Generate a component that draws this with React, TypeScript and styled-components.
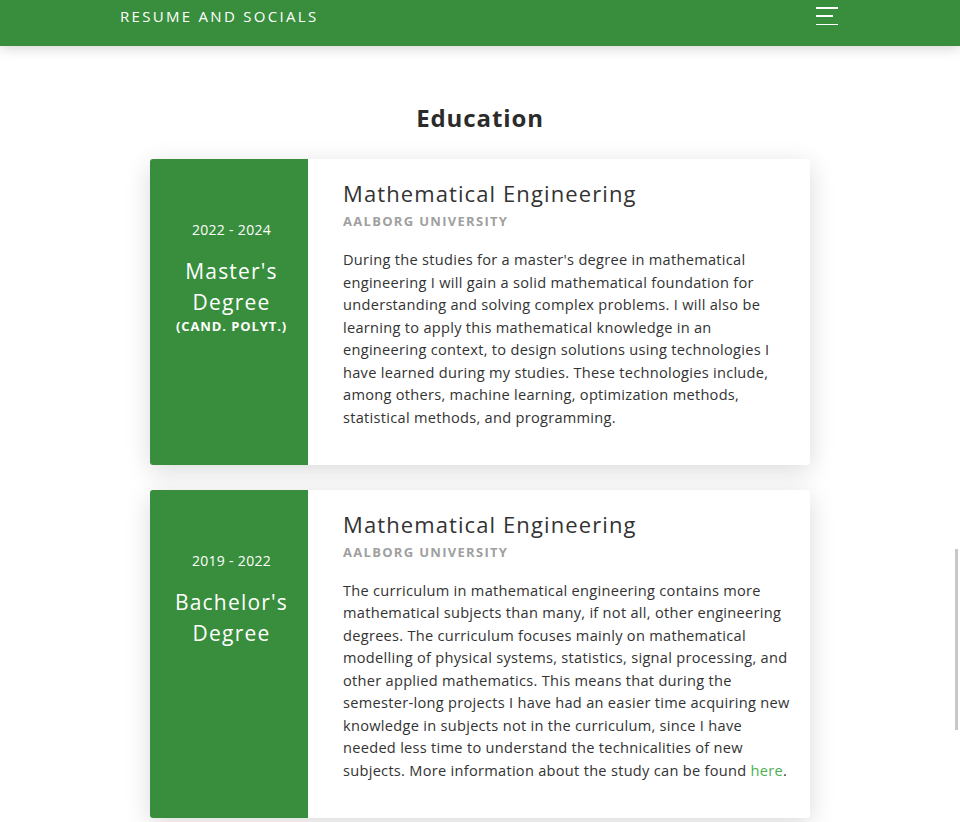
import React from "react";
import styled, { createGlobalStyle } from "styled-components";

const GlobalStyle = createGlobalStyle`
  html, body {
    margin: 0;
    padding: 0;
    background: #ffffff;
    font-family: "Open Sans", "Liberation Sans", sans-serif;
    color: #333333;
  }
  * { box-sizing: border-box; }
`;

const GREEN = "#388e3c";

const Header = styled.header`
  height: 46px;
  background: ${GREEN};
  box-shadow: 0 2px 12px rgba(0, 0, 0, 0.18);
  position: relative;
  z-index: 2;
`;

const HeaderInner = styled.div`
  width: 720px;
  height: 32px;
  margin: 0 auto;
  display: flex;
  align-items: center;
  justify-content: space-between;
`;

const Brand = styled.a`
  color: #ffffff;
  font-size: 15px;
  letter-spacing: 2.3px;
  text-decoration: none;
  font-weight: 400;
`;

const Burger = styled.button`
  width: 22px;
  height: 18px;
  padding: 0;
  margin-right: 2px;
  border: 0;
  background: transparent;
  display: flex;
  flex-direction: column;
  justify-content: space-between;
  align-items: flex-start;
`;

const BurgerLine = styled.span<{ $w: number }>`
  display: block;
  height: 1.5px;
  width: ${(p) => p.$w}px;
  background: #ffffff;
`;

const Main = styled.main`
  padding: 57px 0 4px;
  display: flex;
  flex-direction: column;
  align-items: center;
`;

const SectionTitle = styled.h2`
  margin: 0 0 26px;
  font-size: 24px;
  line-height: 30px;
  font-weight: 700;
  letter-spacing: 0.9px;
  color: #2b2b2b;
`;

const CardList = styled.div`
  width: 660px;
  display: flex;
  flex-direction: column;
  gap: 25px;
`;

const Card = styled.article`
  display: flex;
  background: #ffffff;
  border-radius: 3px;
  overflow: hidden;
  box-shadow: 0 6px 26px rgba(0, 0, 0, 0.15);
`;

const Side = styled.div`
  width: 158px;
  flex: none;
  background: ${GREEN};
  color: #ffffff;
  text-align: center;
  padding: 61px 8px 20px 13px;
`;

const Years = styled.div`
  font-size: 14px;
  line-height: 20px;
  letter-spacing: 0.3px;
`;

const Degree = styled.div`
  margin-top: 16px;
  font-size: 21px;
  line-height: 31px;
  letter-spacing: 1.2px;
`;

const DegreeNote = styled.div`
  font-size: 13px;
  font-weight: 700;
  line-height: 17px;
  letter-spacing: 0.9px;
  margin-top: 0;
`;

const Body = styled.div`
  flex: 1;
  padding: 20px 20px 36.6px 35px;
`;

const Title = styled.h3`
  margin: 0;
  font-size: 22px;
  line-height: 28px;
  font-weight: 400;
  letter-spacing: 1.1px;
  color: #333333;
`;

const School = styled.div`
  margin-top: 5px;
  font-size: 13px;
  line-height: 18px;
  font-weight: 700;
  letter-spacing: 1.3px;
  color: #a0a0a0;
`;

const Text = styled.p`
  margin: 18px 0 0;
  font-size: 14.6px;
  line-height: 22.5px;
  letter-spacing: 0.28px;
  color: #333333;
`;

const Link = styled.a`
  color: #4caf50;
  text-decoration: none;
`;

const ScrollThumb = styled.div`
  position: fixed;
  right: 2px;
  top: 549px;
  width: 3px;
  height: 181px;
  background: #c8c8c8;
`;

type Edu = {
  years: string;
  degree: string;
  note?: string;
  title: string;
  school: string;
  text: React.ReactNode;
};

const items: Edu[] = [
  {
    years: "2022 - 2024",
    degree: "Master's Degree",
    note: "(CAND. POLYT.)",
    title: "Mathematical Engineering",
    school: "AALBORG UNIVERSITY",
    text: (
      <>
        During the studies for a master's degree in mathematical engineering I
        will gain a solid mathematical foundation for understanding and solving
        complex problems. I will also be learning to apply this mathematical
        knowledge in an engineering context, to design solutions using
        technologies I have learned during my studies. These technologies
        include, among others, machine learning, optimization methods,
        statistical methods, and programming.
      </>
    ),
  },
  {
    years: "2019 - 2022",
    degree: "Bachelor's Degree",
    title: "Mathematical Engineering",
    school: "AALBORG UNIVERSITY",
    text: (
      <>
        The curriculum in mathematical engineering contains more mathematical
        subjects than many, if not all, other engineering degrees. The
        curriculum focuses mainly on mathematical modelling of physical systems,
        statistics, signal processing, and other applied mathematics. This means
        that during the semester&#8209;long projects I have had an easier time
        acquiring new knowledge in subjects not in the curriculum, since I have
        needed less time to understand the technicalities of new subjects. More
        information about the study can be found <Link href="#">here</Link>.
      </>
    ),
  },
];

export default function App() {
  return (
    <>
      <GlobalStyle />
      <Header>
        <HeaderInner>
          <Brand href="#">RESUME AND SOCIALS</Brand>
          <Burger aria-label="menu">
            <BurgerLine $w={22} />
            <BurgerLine $w={17} />
            <BurgerLine $w={22} />
          </Burger>
        </HeaderInner>
      </Header>
      <Main>
        <SectionTitle>Education</SectionTitle>
        <CardList>
          {items.map((it) => (
            <Card key={it.years}>
              <Side>
                <Years>{it.years}</Years>
                <Degree>{it.degree}</Degree>
                {it.note && <DegreeNote>{it.note}</DegreeNote>}
              </Side>
              <Body>
                <Title>{it.title}</Title>
                <School>{it.school}</School>
                <Text>{it.text}</Text>
              </Body>
            </Card>
          ))}
        </CardList>
      </Main>
      <ScrollThumb />
    </>
  );
}
